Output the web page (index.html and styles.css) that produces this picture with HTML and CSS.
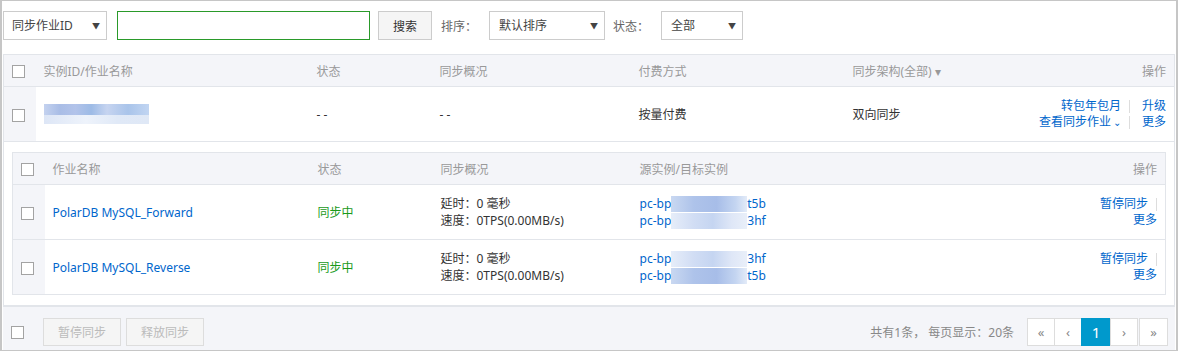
FILE: index.html
```html
<!DOCTYPE html>
<html lang="zh-CN">

<head>
  <meta charset="UTF-8" />
  <title>数据同步</title>
  <link rel="stylesheet" href="styles.css">
</head>

<body>
  <div class="page">
    <div class="toolbar">
      <div class="select select-type">同步作业ID</div>
      <input type="text" class="search-input" />
      <button class="btn">搜索</button>
      <span class="label">排序：</span>
      <div class="select select-sort">默认排序</div>
      <span class="label">状态：</span>
      <div class="select select-status">全部</div>
    </div>

    <table class="grid outer">
      <colgroup>
        <col style="width:32px"><col style="width:273px"><col style="width:123px"><col style="width:199px"><col style="width:214px"><col>
      </colgroup>
      <thead>
        <tr>
          <th class="chk"><span class="checkbox"></span></th>
          <th>实例ID/作业名称</th>
          <th>状态</th>
          <th>同步概况</th>
          <th>付费方式</th>
          <th>同步架构(全部) <span class="caret">▾</span></th>
          <th class="ops">操作</th>
        </tr>
      </thead>
      <tbody>
        <tr class="main-row">
          <td class="chk"><span class="checkbox"></span></td>
          <td><div class="blur blur-id"></div></td>
          <td>- -</td>
          <td>- -</td>
          <td>按量付费</td>
          <td>双向同步</td>
          <td class="ops">
            <div class="op-line"><a>转包年包月</a><i class="sep"></i><a>升级</a></div>
            <div class="op-line"><a>查看同步作业<span class="down">⌄</span></a><i class="sep"></i><a>更多</a></div>
          </td>
        </tr>
        <tr class="detail-row">
          <td colspan="7">
            <table class="grid inner">
              <colgroup>
                <col style="width:32px"><col style="width:265px"><col style="width:123px"><col style="width:199px"><col><col style="width:120px">
              </colgroup>
              <thead>
                <tr>
                  <th class="chk"><span class="checkbox"></span></th>
                  <th>作业名称</th>
                  <th>状态</th>
                  <th>同步概况</th>
                  <th>源实例/目标实例</th>
                  <th class="ops">操作</th>
                </tr>
              </thead>
              <tbody>
                <tr>
                  <td class="chk"><span class="checkbox"></span></td>
                  <td><a>PolarDB MySQL_Forward</a></td>
                  <td class="ok">同步中</td>
                  <td class="two">延时：0 毫秒<br>速度：0TPS(0.00MB/s)</td>
                  <td class="two">
                    <a class="inst">pc-bp<span class="blur blur-inst"></span>t5b</a><br>
                    <a class="inst">pc-bp<span class="blur blur-inst light"></span>3hf</a>
                  </td>
                  <td class="ops two">
                    <div class="op-line"><a>暂停同步</a><i class="sep"></i></div>
                    <div class="op-line"><a>更多</a></div>
                  </td>
                </tr>
                <tr>
                  <td class="chk"><span class="checkbox"></span></td>
                  <td><a>PolarDB MySQL_Reverse</a></td>
                  <td class="ok">同步中</td>
                  <td class="two">延时：0 毫秒<br>速度：0TPS(0.00MB/s)</td>
                  <td class="two">
                    <a class="inst">pc-bp<span class="blur blur-inst light"></span>3hf</a><br>
                    <a class="inst">pc-bp<span class="blur blur-inst"></span>t5b</a>
                  </td>
                  <td class="ops two">
                    <div class="op-line"><a>暂停同步</a><i class="sep"></i></div>
                    <div class="op-line"><a>更多</a></div>
                  </td>
                </tr>
              </tbody>
            </table>
          </td>
        </tr>
      </tbody>
    </table>

    <div class="footer">
      <div class="footer-left">
        <span class="checkbox"></span>
        <button class="btn disabled">暂停同步</button>
        <button class="btn disabled">释放同步</button>
      </div>
      <div class="footer-right">
        <span class="total">共有1条， 每页显示：20条</span>
        <div class="pager">
          <span class="pg">«</span>
          <span class="pg">‹</span>
          <span class="pg active">1</span>
          <span class="pg">›</span>
          <span class="pg last">»</span>
        </div>
      </div>
    </div>
  </div>
</body>

</html>
```

FILE: styles.css
```css
html,
body {
  margin: 0;
  padding: 0;
}

body {
  font-family: "Noto Sans", "Noto Sans CJK SC", sans-serif;
  font-size: 12px;
  color: #333;
  background: #fff;
}

.page {
  width: 1178px;
  height: 351px;
  box-sizing: border-box;
  border: 1px solid #c6c6c6;
  border-left-width: 2px;
  border-right-width: 2px;
  padding: 10px 1px 0 1px;
  display: flex;
  flex-direction: column;
}

/* toolbar */
.toolbar {
  display: flex;
  align-items: center;
  height: 29px;
  margin-bottom: 14px;
}

.select {
  position: relative;
  height: 29px;
  box-sizing: border-box;
  border: 1px solid #ccc;
  background: #fff;
  padding: 0 0 0 8px;
  line-height: 27px;
  color: #444;
}

.select::after {
  content: "▼";
  position: absolute;
  right: 6px;
  top: 0;
  font-size: 8px;
  color: #444;
}

.select-type {
  width: 104px;
}

.select-sort {
  width: 116px;
  padding-left: 9px;
}

.select-status {
  width: 82px;
  padding-left: 9px;
}

.search-input {
  width: 253px;
  height: 29px;
  box-sizing: border-box;
  border: 1px solid #2a9a2a;
  margin: 0 8px 0 10px;
  outline: none;
}

.btn {
  height: 29px;
  box-sizing: border-box;
  border: 1px solid #ccc;
  background: #f5f5f5;
  color: #333;
  font-family: inherit;
  font-size: 12px;
  padding: 0 14px;
  cursor: pointer;
}

.label {
  color: #666;
  margin: 0 12px 0 9px;
}

.select-sort + .label {
  margin-left: 8px;
}

/* tables */
.grid {
  border-collapse: collapse;
  table-layout: fixed;
  width: 100%;
}

.outer {
  border: 1px solid #e2e5ea;
}

.grid th {
  background: #f4f5f9;
  color: #999;
  font-weight: normal;
  text-align: left;
  height: 31px;
  padding: 0 8px;
  border-bottom: 1px solid #e2e5ea;
}

.grid td {
  padding: 0 8px;
  border-bottom: 1px solid #e2e5ea;
  vertical-align: middle;
}

.grid .chk {
  background: #f4f5f9;
  padding: 0 0 0 8px;
}

.grid th.ops,
.grid td.ops {
  text-align: right;
}

.caret {
  font-size: 12px;
  color: #999;
}

.main-row td {
  height: 54px;
}

.checkbox {
  display: inline-block;
  width: 11px;
  height: 11px;
  border: 1px solid #a3a3a3;
  background: #fff;
  vertical-align: middle;
}

a {
  color: #0066cc;
  text-decoration: none;
  cursor: pointer;
}

.op-line {
  display: flex;
  justify-content: flex-end;
  align-items: center;
  line-height: 16px;
}

.sep {
  display: inline-block;
  width: 1px;
  height: 13px;
  background: #ddd;
  margin: 0 12px 0 8px;
}

.inner .sep {
  margin: 0 0 0 8px;
}

.down {
  font-size: 10px;
  margin-left: 2px;
}

.detail-row > td {
  padding: 10px 8px 10px 8px;
}

.inner {
  border: 1px solid #e2e5ea;
}

.inner tbody td {
  height: 54px;
}

.two {
  line-height: 17px;
}

.ok {
  color: #1a9a1a;
}

/* blurred ids */
.blur {
  display: inline-block;
  vertical-align: middle;
}

.blur-id {
  width: 105px;
  height: 20px;
  background:
    linear-gradient(90deg, #c4d2ef, #a9bde6 15%, #b2c3ea 30%, #9dbbe6 45%, #c6d4f0 60%, #a9c4ea 80%, #c1d5f2) top / 100% 11px no-repeat,
    linear-gradient(90deg, #dde6f6, #eef3fb 40%, #e0e9f7 70%, #dfe8f6) bottom / 100% 9px no-repeat;
}

.blur-inst {
  width: 76px;
  height: 16px;
  margin-top: -2px;
  background: linear-gradient(90deg, #c9d8f1, #aec3ea 30%, #a7bde8 60%, #c4d5f1 85%, #e3ebf8);
}

.blur-inst.light {
  background: linear-gradient(90deg, #e6edf9, #d1ddf4 30%, #c5d5f1 55%, #dfe7f7 80%, #e9eff9);
}

/* footer */
.footer {
  flex: 1;
  background: #f4f5f9;
  border-top: 1px solid #e2e5ea;
  display: flex;
  justify-content: space-between;
  align-items: flex-start;
  padding: 11px 7px 0 8px;
}

.footer-left {
  display: flex;
  align-items: center;
  height: 28px;
}

.footer-left .checkbox {
  margin-right: 19px;
}

.btn.disabled {
  height: 28px;
  width: 78px;
  padding: 0;
  border-color: #ddd;
  color: #bbb;
  margin-right: 5px;
  cursor: default;
}

.footer-right {
  display: flex;
  align-items: center;
}

.total {
  color: #888;
  margin-right: 14px;
}

.pager {
  display: flex;
}

.pg {
  width: 28px;
  height: 28px;
  box-sizing: border-box;
  border: 1px solid #ddd;
  margin-left: -1px;
  background: #fff;
  color: #888;
  display: flex;
  align-items: center;
  justify-content: center;
  font-size: 13px;
}

.pg.active {
  width: 30px;
  background: #0099cc;
  border-color: #0099cc;
  color: #fff;
  font-size: 15px;
}

.pg.last {
  margin-left: 1px;
  width: 29px;
}
```
